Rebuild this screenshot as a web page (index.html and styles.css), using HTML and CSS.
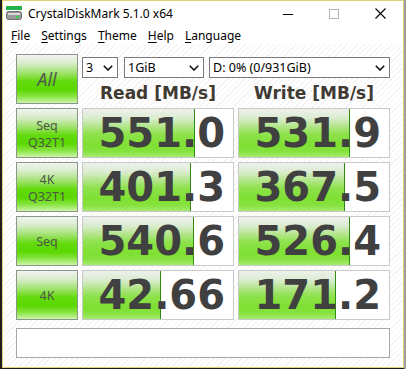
FILE: index.html
```html
<!DOCTYPE html>
<html>
<head>
<meta charset="utf-8">
<link rel="stylesheet" href="styles.css">
</head>
<body>
<div class="desk-left"></div>
<div class="window">
  <div class="titlebar">
    <svg class="appicon" width="16" height="14" viewBox="0 0 16 14">
      <rect x="0" y="0" width="16" height="4" fill="#22b24c"/>
      <rect x="0.5" y="5.5" width="15" height="8" rx="2" fill="#9a9a9a" stroke="#6e6e6e"/>
      <rect x="2" y="7" width="12" height="2" fill="#d8d8d8"/>
      <rect x="10" y="10" width="3" height="2" fill="#2fd04a"/>
    </svg>
    <span class="title">CrystalDiskMark 5.1.0 x64</span>
    <div class="caps">
      <div class="cap"><svg width="10" height="10" viewBox="0 0 10 10"><line x1="0" y1="5.5" x2="10" y2="5.5" stroke="#000" stroke-width="1"/></svg></div>
      <div class="cap"><svg width="10" height="10" viewBox="0 0 10 10"><rect x="0.5" y="0.5" width="9" height="9" fill="none" stroke="#b4b4b4" stroke-width="1"/></svg></div>
      <div class="cap"><svg width="11" height="11" viewBox="0 0 11 11"><path d="M0.5 0.5 L10.5 10.5 M10.5 0.5 L0.5 10.5" stroke="#000" stroke-width="1.1" fill="none"/></svg></div>
    </div>
  </div>
  <div class="menubar">
    <span class="mi"><u>F</u>ile</span>
    <span class="mi"><u>S</u>ettings</span>
    <span class="mi"><u>T</u>heme</span>
    <span class="mi"><u>H</u>elp</span>
    <span class="mi"><u>L</u>anguage</span>
  </div>
  <div class="client">
    <div class="grid">
      <div class="btn btn-all">All</div>
      <div class="top">
        <div class="selects">
          <div class="sel sel-count"><span>3</span><svg class="chev" width="10" height="6" viewBox="0 0 10 6"><path d="M0.8 0.8 L5 5 L9.2 0.8" stroke="#111" stroke-width="1.6" fill="none"/></svg></div>
          <div class="sel sel-size"><span>1GiB</span><svg class="chev" width="10" height="6" viewBox="0 0 10 6"><path d="M0.8 0.8 L5 5 L9.2 0.8" stroke="#111" stroke-width="1.6" fill="none"/></svg></div>
          <div class="sel sel-drive"><span>D: 0% (0/931GiB)</span><svg class="chev" width="10" height="6" viewBox="0 0 10 6"><path d="M0.8 0.8 L5 5 L9.2 0.8" stroke="#111" stroke-width="1.6" fill="none"/></svg></div>
        </div>
        <div class="heads">
          <div class="head">Read [MB/s]</div>
          <div class="head">Write [MB/s]</div>
        </div>
      </div>

      <div class="btn btn-test"><span>Seq</span><span>Q32T1</span></div>
      <div class="val"><div class="bar" style="width:111px"></div><span class="num">551.0</span></div>
      <div class="val"><div class="bar" style="width:110px"></div><span class="num">531.9</span></div>

      <div class="btn btn-test"><span>4K</span><span>Q32T1</span></div>
      <div class="val"><div class="bar" style="width:107px"></div><span class="num">401.3</span></div>
      <div class="val"><div class="bar" style="width:105px"></div><span class="num">367.5</span></div>

      <div class="btn btn-test btn-one"><span>Seq</span></div>
      <div class="val"><div class="bar" style="width:110px"></div><span class="num">540.6</span></div>
      <div class="val"><div class="bar" style="width:110px"></div><span class="num">526.4</span></div>

      <div class="btn btn-test btn-one"><span>4K</span></div>
      <div class="val"><div class="bar" style="width:77px"></div><span class="num">42.66</span></div>
      <div class="val"><div class="bar" style="width:96px"></div><span class="num">171.2</span></div>
    </div>
    <div class="comment"></div>
  </div>
</div>
<div class="desk-right"></div>
</body>
</html>
```

FILE: styles.css
```css
html, body {
  margin: 0;
  padding: 0;
}
body {
  width: 406px;
  height: 369px;
  overflow: hidden;
  display: flex;
  align-items: flex-start;
  background: #1b1b1b;
  font-family: "Noto Sans", "Open Sans", sans-serif;
}
.desk-left {
  width: 2px;
  height: 369px;
  background: #1e1e1e;
  flex: none;
}
.desk-right {
  width: 2px;
  height: 369px;
  background: #9c9c9c;
  flex: none;
}
.window {
  width: 400px;
  height: 366px;
  border: 1px solid #e3d27c;
  background: #ffffff;
  display: flex;
  flex-direction: column;
  flex: none;
}
.titlebar {
  height: 25px;
  display: flex;
  align-items: center;
  padding-left: 3px;
  background: #fff;
}
.appicon {
  flex: none;
  margin-top: -1px;
}
.title {
  margin-left: 6px;
  font-size: 12px;
  color: #000;
  margin-top: -1px;
}
.caps {
  margin-left: auto;
  display: flex;
  height: 25px;
}
.cap {
  width: 46px;
  display: flex;
  align-items: center;
  justify-content: center;
}
.menubar {
  height: 18px;
  display: flex;
  align-items: center;
  padding-left: 8px;
  gap: 0;
  font-size: 12px;
  color: #000;
  background: #fff;
}
.mi {
  padding: 0 6px 0 0;
  margin-right: 5px;
}
.mi u {
  text-decoration-thickness: 1px;
  text-underline-offset: 2px;
}
.client {
  flex: 1;
  padding: 10px 0 0 13px;
  background-color: #fff;
  background-image: repeating-linear-gradient(135deg, #ffffff 0px, #ffffff 3px, #f3f3f3 3px, #f3f3f3 4px);
}
.grid {
  display: grid;
  grid-template-columns: 62px 152px 152px;
  grid-auto-rows: 50px;
  column-gap: 4px;
  row-gap: 4px;
}
.btn {
  box-sizing: border-box;
  border: 1px solid #8a978a;
  background: linear-gradient(to bottom, #f2f4f0 0%, #d6ecc8 18%, #9ee26a 38%, #62da0c 55%, #5ad800 72%, #86e440 86%, #cdf4a8 100%);
  display: flex;
  flex-direction: column;
  align-items: center;
  justify-content: center;
  color: #4c5646;
}
.btn-all {
  font-size: 18px;
  font-style: italic;
  color: #525a4e;
}
.btn-test {
  font-size: 12.5px;
  line-height: 17px;
  padding-top: 1px;
}
.top {
  grid-column: 2 / 4;
  display: flex;
  flex-direction: column;
}
.selects {
  display: flex;
  margin-top: 3px;
  height: 21px;
}
.sel {
  box-sizing: border-box;
  height: 21px;
  border: 1px solid #7a7a7a;
  background: #fff;
  display: flex;
  align-items: center;
  padding-left: 3px;
  padding-right: 4px;
  font-size: 12.5px;
  color: #000;
}
.sel span {
  flex: 1;
  white-space: nowrap;
}
.chev {
  flex: none;
}
.sel-count { width: 36px; }
.sel-size { width: 80px; margin-left: 6px; }
.sel-drive { width: 181px; margin-left: 5px; }
.heads {
  display: grid;
  grid-template-columns: 152px 152px;
  column-gap: 4px;
  margin-top: 3px;
}
.head {
  text-align: center;
  font-family: "DejaVu Sans", sans-serif;
  font-weight: bold;
  font-size: 17px;
  line-height: 24px;
  color: #413a33;
}
.val {
  box-sizing: border-box;
  border: 1px solid #c9c9c9;
  background: #fff;
  position: relative;
  display: flex;
  align-items: center;
  justify-content: flex-end;
  padding-right: 8px;
}
.bar {
  position: absolute;
  left: 0;
  top: 0;
  bottom: 0;
  border-right: 1px solid #2f8c12;
  background: linear-gradient(to bottom, #eef1ec 0%, #dcecd2 18%, #b6e690 35%, #8ee24c 52%, #7fe032 75%, #86e23e 88%, #a6ea6e 100%);
}
.num {
  position: relative;
  font-family: "DejaVu Sans", sans-serif;
  font-weight: bold;
  font-size: 40px;
  line-height: 48px;
  color: #404040;
  letter-spacing: 0;
}
.comment {
  box-sizing: border-box;
  width: 374px;
  height: 30px;
  margin-top: 8px;
  border: 1px solid #a6a6a6;
  background: #fff;
}
```
